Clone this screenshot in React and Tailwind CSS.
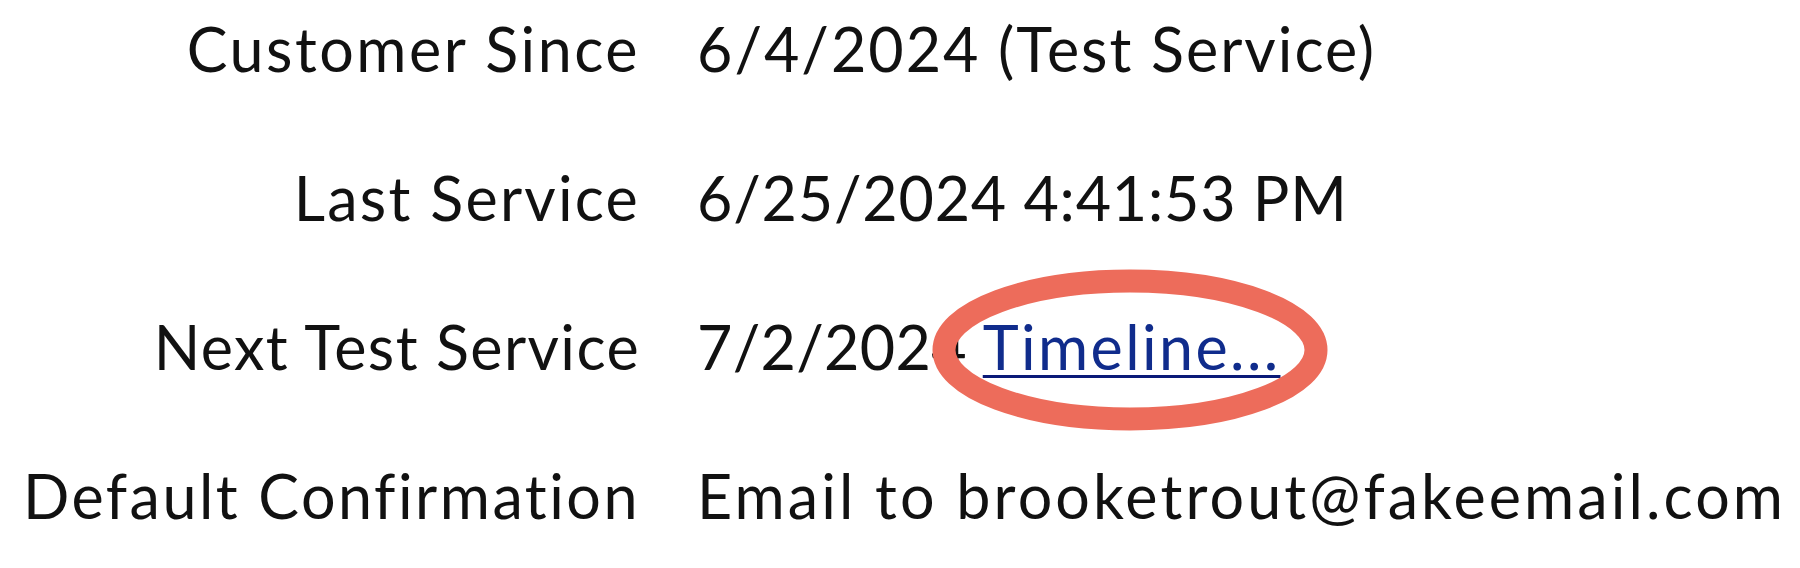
export default function App() {
  const rows = [
    { label: "Customer Since", lt: "tracking-[2.5px]", value: "6/4/2024 (Test Service)", vt: "tracking-[2px]" },
    { label: "Last Service", lt: "tracking-[2.2px]", value: "6/25/2024 4:41:53 PM", vt: "tracking-[0.8px]" },
    { label: "Next Test Service", lt: "tracking-[1.4px]", value: null, vt: "tracking-[0.3px]" },
    { label: "Default Confirmation", lt: "tracking-[2.5px]", value: "Email to brooketrout@fakeemail.com", vt: "tracking-[3.1px]" },
  ];
  return (
    <div className="relative w-[1800px] h-[568px] bg-white overflow-hidden font-['Lato','Liberation_Sans',sans-serif] text-[61px] leading-[73px] text-[#111]">
      <div className="grid grid-cols-[640px_auto] gap-x-[57px] gap-y-[76px] pt-[12px]">
        {rows.map((r) => (
          <div key={r.label} className="contents">
            <div className={`text-right whitespace-nowrap ${r.lt}`}>{r.label}</div>
            <div className={`whitespace-nowrap ${r.vt}`}>
              {r.value !== null ? (
                r.value
              ) : (
                <>
                  7/2/2024{" "}
                  <a className="tracking-[2.4px] text-[#102c8c] underline decoration-[#0a1a78] decoration-[3px] underline-offset-[5px]">
                    Timeline...
                  </a>
                </>
              )}
            </div>
          </div>
        ))}
      </div>
      <svg className="absolute left-[930px] top-[267px]" width="400" height="166" viewBox="0 0 400 166">
        <ellipse cx="200" cy="83" rx="186" ry="69" fill="none" stroke="#ED6C5B" strokeWidth="23" />
      </svg>
    </div>
  );
}
